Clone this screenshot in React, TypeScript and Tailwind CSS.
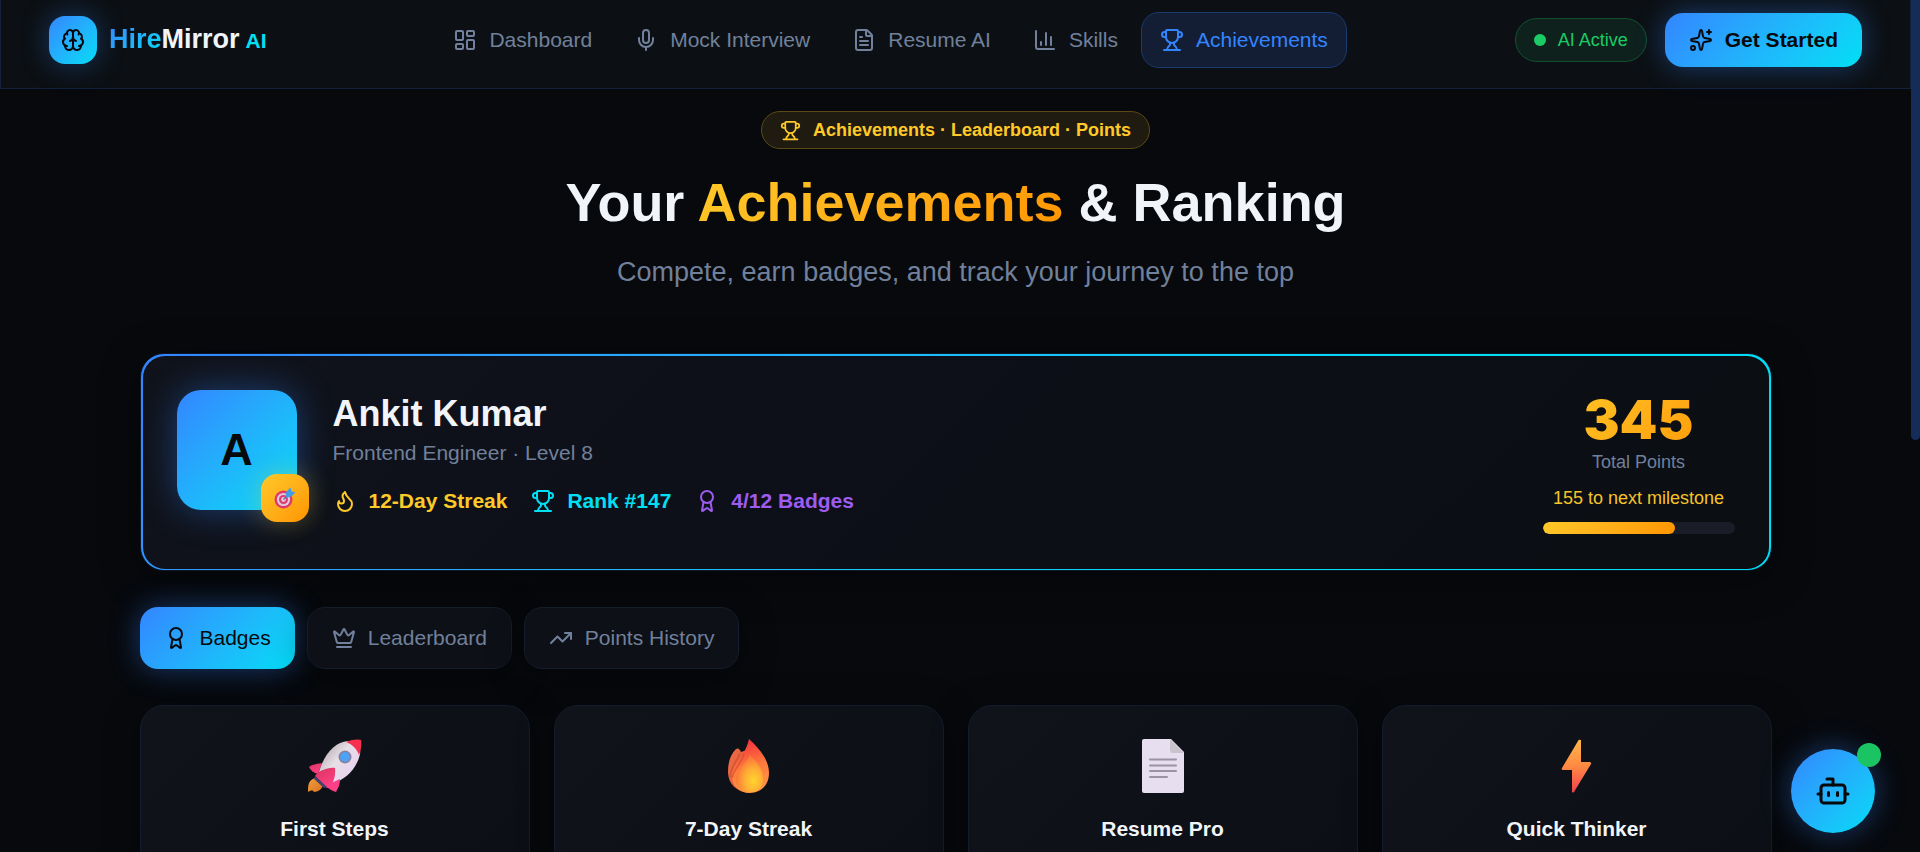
import type { ReactNode } from 'react';
import {
  Award,
  Bot,
  Brain,
  ChartColumn,
  Crown,
  FileText,
  Flame,
  LayoutDashboard,
  Mic,
  Sparkles,
  TrendingUp,
  Trophy,
} from 'lucide-react';

const navItems = [
  { label: 'Dashboard', icon: LayoutDashboard },
  { label: 'Mock Interview', icon: Mic },
  { label: 'Resume AI', icon: FileText },
  { label: 'Skills', icon: ChartColumn },
  { label: 'Achievements', icon: Trophy, active: true },
];

const tabs = [
  { label: 'Badges', icon: Award, active: true },
  { label: 'Leaderboard', icon: Crown },
  { label: 'Points History', icon: TrendingUp },
];

const TargetIcon = () => (
  <svg viewBox="0 0 22 22" className="size-[22px]">
    <circle cx="9.500" cy="12.500" r="9" fill="#e0386b" />
    <circle cx="9.500" cy="12.500" r="6.6" fill="#dccbe0" />
    <circle cx="9.500" cy="12.500" r="4.5" fill="#e0386b" />
    <circle cx="9.500" cy="12.500" r="2.4" fill="#dccbe0" />
    <path d="M9.500 12.500 15 7" stroke="#5a6a9a" strokeWidth="1.2" />
    <path d="M11.500 9.500 12.500 4.500 16.500 0.500 17.500 4.200 21.500 5.200 17.500 9.500 13 10.500Z" fill="#3f9fe6" />
  </svg>
);

const RocketIcon = () => (
  <svg viewBox="0 0 54 54" className="size-[54px]">
    <defs>
      <linearGradient id="rocketBody" x1="0.1" y1="0.2" x2="0.8" y2="0.8">
        <stop offset="0" stopColor="#b9b0b4" />
        <stop offset="0.45" stopColor="#e6dfe6" />
        <stop offset="1" stopColor="#e8d2f0" />
      </linearGradient>
      <linearGradient id="rocketFlame" x1="0" y1="0" x2="1" y2="1">
        <stop offset="0" stopColor="#f0a03c" />
        <stop offset="1" stopColor="#d9701f" />
      </linearGradient>
      <linearGradient id="rocketFin" x1="0" y1="0" x2="0.6" y2="1">
        <stop offset="0" stopColor="#d8355f" />
        <stop offset="1" stopColor="#ff3f86" />
      </linearGradient>
    </defs>
    <path d="M7 39C0 41 0 47 0 53 3 51 5 51 6 53 11 53 15 49 15 45Z" fill="url(#rocketFlame)" />
    <path d="M14 24C7 25 3 26 1 28 3 32 6 34 10 35Z" fill="url(#rocketFin)" />
    <path d="M11 33C16 15 27 3 40 2 50 4 53 9 52 15 49 29 38 41 23 45Z" fill="url(#rocketBody)" />
    <path d="M38 3C44 0 51 0 53 1 54 4 53 12 51 16 49 10 44 5 38 3Z" fill="#f5314f" />
    <path d="M27 29C20 28 10 32 7 37L19 49C25 46 28 38 27 29Z" fill="url(#rocketFin)" />
    <path d="M23 44 32 40C32 47 29 51 28 53 24 52 20 49 18 47Z" fill="#ff3f86" />
    <path d="M7 37 19 48 16 49 6 40Z" fill="#45406f" />
    <circle cx="37" cy="18" r="6.5" fill="#8b7f9b" />
    <circle cx="37" cy="18" r="4.9" fill="#4ca2f5" />
  </svg>
);

const FireIcon = () => (
  <svg viewBox="0 0 54 54" className="size-[54px]">
    <defs>
      <linearGradient id="fireOuter" x1="0.5" y1="0" x2="0.7" y2="1">
        <stop offset="0" stopColor="#f4333d" />
        <stop offset="0.5" stopColor="#ff7b3d" />
        <stop offset="1" stopColor="#ff9a45" />
      </linearGradient>
      <linearGradient id="fireSide" x1="0" y1="0" x2="1" y2="0.6">
        <stop offset="0" stopColor="#f0704a" />
        <stop offset="1" stopColor="#d9532f" />
      </linearGradient>
      <radialGradient id="fireInner" cx="0.65" cy="0.7" r="0.65">
        <stop offset="0" stopColor="#ffd52e" />
        <stop offset="0.5" stopColor="#ffae35" />
        <stop offset="1" stopColor="#f87838" />
      </radialGradient>
    </defs>
    <path d="M14 10C8 16 6 24 6 33 6 45 15 53 27 54L28 10 19 13Q17 8 14 10Z" fill="url(#fireSide)" />
    <path d="M27 0C39 11 47 22 47 34 47 46 39 54 28 54 17 54 9 46 10 36 12 22 23 18 27 0Z" fill="url(#fireOuter)" />
    <path d="M18 14C16 21 9 27 8 38M22 15C20 24 12 29 10 39" fill="none" stroke="#c94a2c" strokeOpacity="0.6" strokeWidth="1.5" />
    <path d="M28 16C35 23 41 30 41 40 41 48 36 53 29 53 20 53 13 48 14 39 15 31 23 25 28 16Z" fill="url(#fireInner)" />
  </svg>
);

const PageIcon = () => (
  <svg viewBox="0 0 54 54" className="size-[54px]">
    <path d="M8 0H35L48 13V52Q48 54 46 54H8Q6 54 6 52V2Q6 0 8 0Z" fill="#e7dff0" />
    <path d="M34 0V11Q34 14 37 14H48Z" fill="#c9c3cc" />
    <path d="M14 20.500H40M14 26.500H40M14 32H40M14 38H31" stroke="#9b93a3" strokeWidth="2" strokeLinecap="round" />
  </svg>
);

const BoltIcon = () => (
  <svg viewBox="0 0 54 54" className="size-[54px]">
    <defs>
      <linearGradient id="boltFill" x1="0.5" y1="0" x2="0.5" y2="1">
        <stop offset="0" stopColor="#ffb84a" />
        <stop offset="0.5" stopColor="#ff8a42" />
        <stop offset="1" stopColor="#f0404f" />
      </linearGradient>
    </defs>
    <path d="M28 2Q29 0 31 1V23H40Q42 24 41 25L24 53Q23 54 22 53V31H13Q11 31 12 29Z" fill="url(#boltFill)" />
  </svg>
);

const badges = [
  { title: 'First Steps', icon: <RocketIcon /> },
  { title: '7-Day Streak', icon: <FireIcon /> },
  { title: 'Resume Pro', icon: <PageIcon /> },
  { title: 'Quick Thinker', icon: <BoltIcon /> },
];

const Header = () => (
  <header className="flex shrink-0 items-center justify-between border border-t-0 border-[#13213a] bg-[#0c1014] px-12 pt-3 pb-5">
    <a href="#home" className="flex items-center gap-3">
      <span className="flex size-12 items-center justify-center rounded-2xl bg-linear-135 from-[#3385ff] to-[#00dcf5] text-[#07090d] shadow-[0_0_28px_rgba(51,133,255,0.35)]">
        <Brain size={24} />
      </span>
      <span className="text-[27px] leading-8 font-bold text-slate-100">
        <span className="bg-linear-135 from-[#3385ff] to-[#00dcf5] bg-clip-text text-transparent">Hire</span>Mirror
        <span className="ml-1.5 text-[21px] text-[#00e0f5]">AI</span>
      </span>
    </a>

    <nav className="flex items-center gap-1">
      {navItems.map(({ label, icon: Icon, active }) => (
        <a
          key={label}
          href={`#${label}`}
          className={`flex h-14 items-center gap-3 rounded-[18px] border px-[18px] text-[21px] ${
            active ? 'border-[#1a3a70] bg-[#131e34] text-[#3385ff]' : 'border-transparent text-[#71809b]'
          }`}
        >
          <Icon size={24} />
          {label}
        </a>
      ))}
    </nav>

    <div className="flex items-center gap-[18px]">
      <div className="flex h-11 items-center gap-3 rounded-full border border-[#12512f] bg-[#0e211d] px-[18px] text-lg text-[#1bcb66]">
        <span className="size-3 rounded-full bg-[#1bcb66]"></span>
        AI Active
      </div>
      <button className="flex h-[54px] items-center gap-3 rounded-[18px] bg-linear-135 from-[#3385ff] to-[#00dff5] px-6 text-[21px] font-bold text-[#07090d] shadow-[0_0_28px_rgba(51,133,255,0.4)]">
        <Sparkles size={24} />
        Get Started
      </button>
    </div>
  </header>
);

const Stat = ({ icon, label, className }: { icon: ReactNode; label: string; className: string }) => (
  <div className={`flex items-center gap-3 text-[21px] font-bold ${className}`}>
    {icon}
    {label}
  </div>
);

const ProfileCard = () => (
  <section className="rounded-3xl border border-[#0f1726] bg-linear-135 from-[#3385ff] to-[#00dcf5] to-70% p-0.5 pb-px shadow-[0_8px_40px_rgba(0,0,0,0.4)]">
    <div className="flex items-start justify-between rounded-[22px] bg-linear-135 from-[#10131b] via-[#0c0f17] to-[#0b0e12] p-[34px] pb-[35px]">
      <div className="flex items-start gap-9">
        <div className="relative flex size-[120px] items-center justify-center rounded-3xl bg-linear-135 from-[#3385ff] to-[#00dcf5] text-[45px] font-bold text-[#07090d] shadow-[0_0_36px_rgba(51,133,255,0.4)]">
          A
          <span className="absolute -right-3 -bottom-3 flex size-12 items-center justify-center rounded-2xl bg-linear-135 from-[#ffc928] to-[#ff9500] shadow-[0_0_24px_rgba(255,201,40,0.3)]">
            <TargetIcon />
          </span>
        </div>
        <div>
          <h2 className="pt-1 text-4xl leading-10 font-bold text-slate-100">Ankit Kumar</h2>
          <p className="mt-1 text-[21px] leading-[30px] text-[#71809b]">Frontend Engineer · Level 8</p>
          <div className="mt-[17px] flex gap-6">
            <Stat icon={<Flame size={24} />} label="12-Day Streak" className="text-[#ffc928]" />
            <Stat icon={<Trophy size={24} />} label="Rank #147" className="text-[#00e0f5]" />
            <Stat icon={<Award size={24} />} label="4/12 Badges" className="text-[#9d5cf0]" />
          </div>
        </div>
      </div>

      <div className="w-48 text-center">
        <div className="bg-linear-135 from-[#ffc928] to-[#ff9500] bg-clip-text font-[Inter,sans-serif] text-[54px] leading-[60px] font-black text-transparent">
          345
        </div>
        <div className="text-lg leading-6 text-[#71809b]">Total Points</div>
        <div className="mt-3 text-lg leading-6 text-[#f5c32a]">155 to next milestone</div>
        <div className="mt-3 h-3 overflow-hidden rounded-full bg-[#1a1d27]">
          <div className="h-full w-[69%] rounded-full bg-linear-135 from-[#ffc928] to-[#ff9500]"></div>
        </div>
      </div>
    </div>
  </section>
);

export default function App() {
  return (
    <div className="flex h-screen bg-[#07090d] font-['Liberation_Sans',Arial,sans-serif]">
      <div className="flex min-w-0 flex-1 flex-col">
        <Header />

        <main className="min-h-0 flex-1 overflow-y-auto px-6 [scrollbar-width:none]">
          <div className="mx-auto max-w-[1632px] pt-[22px] pb-24">
            <div className="flex flex-col items-center text-center">
              <div className="flex h-[38px] items-center gap-3 rounded-full border border-[#5c4917] bg-[#1f1b10] px-[18px] text-lg font-bold text-[#ffc928]">
                <Trophy size={21} />
                Achievements · Leaderboard · Points
              </div>
              <h1 className="mt-5 text-[54px] leading-[66px] font-bold text-slate-100">
                Your{' '}
                <span className="bg-linear-135 from-[#ffc928] to-[#ff9500] bg-clip-text text-transparent">Achievements</span>{' '}
                &amp; Ranking
              </h1>
              <p className="mt-[17px] text-[27px] leading-10 text-[#71809b]">
                Compete, earn badges, and track your journey to the top
              </p>
            </div>

            <div className="mt-[61px]">
              <ProfileCard />
            </div>

            <div className="mt-9 flex gap-3">
              {tabs.map(({ label, icon: Icon, active }) => (
                <button
                  key={label}
                  className={`flex h-[62px] items-center gap-3 rounded-[18px] px-6 text-[21px] ${
                    active
                      ? 'bg-linear-135 from-[#3385ff] to-[#00dcf5] text-[#07090d] shadow-[0_0_30px_rgba(51,133,255,0.4)]'
                      : 'border border-[#151c2b] bg-[#0d1017] text-[#71809b] shadow-[0_8px_36px_rgba(0,0,0,0.4)]'
                  }`}
                >
                  <Icon size={24} />
                  {label}
                </button>
              ))}
            </div>

            <div className="mt-9 grid grid-cols-4 gap-6">
              {badges.map((badge) => (
                <article
                  key={badge.title}
                  className="flex flex-col items-center rounded-3xl border border-[#131c2d] bg-linear-135 from-[#10131a] to-[#0b0e15] px-6 pt-[33px] pb-24 shadow-[0_8px_36px_rgba(0,0,0,0.4)]"
                >
                  {badge.icon}
                  <h3 className="mt-5 text-[21px] leading-8 font-bold text-slate-100">{badge.title}</h3>
                </article>
              ))}
            </div>
          </div>
        </main>
      </div>

      <div className="w-[9px] shrink-0">
        <div className="h-[440px] rounded-b-full bg-[#152c58]"></div>
      </div>

      <button
        aria-label="Open assistant"
        className="fixed right-[45px] bottom-[19px] flex size-[84px] items-center justify-center rounded-full bg-linear-135 from-[#3385ff] to-[#00dcf5] text-[#07090d] shadow-[0_0_30px_rgba(51,133,255,0.4)]"
      >
        <Bot size={36} />
        <span className="absolute -top-1.5 -right-1.5 size-6 rounded-full bg-[#1bc462]"></span>
      </button>
    </div>
  );
}
